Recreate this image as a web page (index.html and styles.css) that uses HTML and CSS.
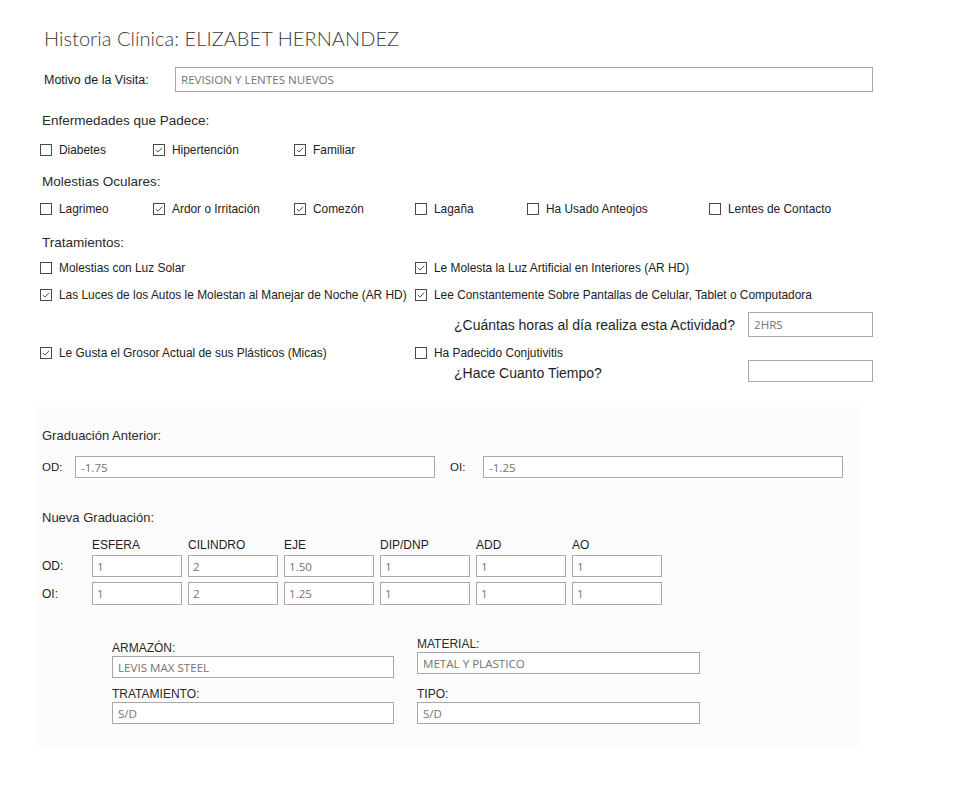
FILE: index.html
```html
<!DOCTYPE html>
<html lang="es">
<head>
<meta charset="utf-8">
<title>Historia Clínica</title>
<link rel="stylesheet" href="styles.css">
</head>
<body>
<div class="page">
  <h1 class="title">Historia Clínica: ELIZABET HERNANDEZ</h1>

  <div class="motivo">
    <span class="motivo-label">Motivo de la Visita:</span>
    <div class="field motivo-field">REVISION Y LENTES NUEVOS</div>
  </div>

  <div class="section-label sec-enf">Enfermedades que Padece:</div>
  <div class="cb-row cb-six row-enf">
    <label class="cb"><span class="box"></span>Diabetes</label>
    <label class="cb"><span class="box checked"><svg viewBox="0 0 12 12"><polyline points="2.3,6 4.8,8.5 9.8,3.2"/></svg></span>Hipertención</label>
    <label class="cb"><span class="box checked"><svg viewBox="0 0 12 12"><polyline points="2.3,6 4.8,8.5 9.8,3.2"/></svg></span>Familiar</label>
  </div>

  <div class="section-label sec-mol">Molestias Oculares:</div>
  <div class="cb-row cb-six row-mol">
    <label class="cb"><span class="box"></span>Lagrimeo</label>
    <label class="cb"><span class="box checked"><svg viewBox="0 0 12 12"><polyline points="2.3,6 4.8,8.5 9.8,3.2"/></svg></span>Ardor o Irritación</label>
    <label class="cb"><span class="box checked"><svg viewBox="0 0 12 12"><polyline points="2.3,6 4.8,8.5 9.8,3.2"/></svg></span>Comezón</label>
    <label class="cb"><span class="box"></span>Lagaña</label>
    <label class="cb"><span class="box"></span>Ha Usado Anteojos</label>
    <label class="cb"><span class="box"></span>Lentes de Contacto</label>
  </div>

  <div class="section-label sec-tra">Tratamientos:</div>
  <div class="cb-row cb-two row-t1">
    <label class="cb"><span class="box"></span>Molestias con Luz Solar</label>
    <label class="cb"><span class="box checked"><svg viewBox="0 0 12 12"><polyline points="2.3,6 4.8,8.5 9.8,3.2"/></svg></span>Le Molesta la Luz Artificial en Interiores (AR HD)</label>
  </div>
  <div class="cb-row cb-two row-t2">
    <label class="cb"><span class="box checked"><svg viewBox="0 0 12 12"><polyline points="2.3,6 4.8,8.5 9.8,3.2"/></svg></span>Las Luces de los Autos le Molestan al Manejar de Noche (AR HD)</label>
    <label class="cb"><span class="box checked"><svg viewBox="0 0 12 12"><polyline points="2.3,6 4.8,8.5 9.8,3.2"/></svg></span>Lee Constantemente Sobre Pantallas de Celular, Tablet o Computadora</label>
  </div>
  <div class="question row-horas">
    <span class="q-text">¿Cuántas horas al día realiza esta Actividad?</span>
    <div class="field q-field">2HRS</div>
  </div>
  <div class="cb-row cb-two row-t3">
    <label class="cb"><span class="box checked"><svg viewBox="0 0 12 12"><polyline points="2.3,6 4.8,8.5 9.8,3.2"/></svg></span>Le Gusta el Grosor Actual de sus Plásticos (Micas)</label>
    <label class="cb"><span class="box"></span>Ha Padecido Conjutivitis</label>
  </div>
  <div class="question row-hace">
    <span class="q-text">¿Hace Cuanto Tiempo?</span>
    <div class="field q-field"></div>
  </div>

  <div class="panel">
    <div class="panel-label">Graduación Anterior:</div>
    <div class="anterior">
      <span class="eye-label">OD:</span>
      <div class="field ant-field">-1.75</div>
      <span class="eye-label oi">OI:</span>
      <div class="field ant-field">-1.25</div>
    </div>

    <div class="panel-label nueva">Nueva Graduación:</div>
    <div class="grad-table">
      <span></span>
      <span class="col-head">ESFERA</span>
      <span class="col-head">CILINDRO</span>
      <span class="col-head">EJE</span>
      <span class="col-head">DIP/DNP</span>
      <span class="col-head">ADD</span>
      <span class="col-head">AO</span>

      <span class="row-head">OD:</span>
      <div class="field cell">1</div>
      <div class="field cell">2</div>
      <div class="field cell">1.50</div>
      <div class="field cell">1</div>
      <div class="field cell">1</div>
      <div class="field cell">1</div>

      <span class="row-head">OI:</span>
      <div class="field cell">1</div>
      <div class="field cell">2</div>
      <div class="field cell">1.25</div>
      <div class="field cell">1</div>
      <div class="field cell">1</div>
      <div class="field cell">1</div>
    </div>

    <div class="lens">
      <div class="lens-col left">
        <div class="lens-label">ARMAZÓN:</div>
        <div class="field lens-field">LEVIS MAX STEEL</div>
        <div class="lens-label second">TRATAMIENTO:</div>
        <div class="field lens-field">S/D</div>
      </div>
      <div class="lens-col right">
        <div class="lens-label">MATERIAL:</div>
        <div class="field lens-field">METAL Y PLASTICO</div>
        <div class="lens-label second">TIPO:</div>
        <div class="field lens-field">S/D</div>
      </div>
    </div>
  </div>
</div>
</body>
</html>
```

FILE: styles.css
```css
html, body {
  margin: 0;
  padding: 0;
  background: #ffffff;
}

body {
  font-family: "Liberation Sans", Arial, sans-serif;
  color: #1e1e1e;
}

.page {
  width: 958px;
  height: 790px;
  overflow: hidden;
  box-sizing: border-box;
}

.title {
  margin: 0;
  padding: 22px 0 0 44px;
  height: 32px;
  line-height: 32px;
  font-family: "Lato", "Open Sans", sans-serif;
  font-weight: 300;
  font-size: 20px;
  color: #3a3a3a;
  letter-spacing: 0.05px;
}

.field {
  box-sizing: border-box;
  border: 1px solid #a8a8a8;
  background: #ffffff;
  font-family: "Open Sans", "Noto Sans", sans-serif;
  font-size: 11.6px;
  color: #747474;
  padding: 0 5px;
  display: flex;
  align-items: center;
  white-space: nowrap;
  overflow: hidden;
}

/* Motivo */
.motivo {
  display: flex;
  align-items: center;
  margin-top: 13px;
  height: 25px;
  padding-left: 44px;
}
.motivo-label {
  width: 131px;
  font-size: 12.5px;
  color: #1a1a1a;
}
.motivo-field {
  width: 698px;
  height: 25px;
}

/* section labels */
.section-label {
  padding-left: 42px;
  height: 20px;
  line-height: 20px;
  font-size: 13.5px;
  color: #2a2a2a;
}
.sec-enf { margin-top: 19px; }
.sec-mol { margin-top: 12px; }
.sec-tra { margin-top: 14px; }

/* checkbox rows */
.cb-row {
  display: grid;
  padding-left: 40px;
  height: 20px;
  align-items: center;
}
.cb-six { grid-template-columns: 113px 141px 121px 112px 182px auto; }
.cb-two { grid-template-columns: 375px auto; }
.row-enf { margin-top: 9px; }
.row-mol { margin-top: 7px; }
.row-t1 { margin-top: 5px; }
.row-t2 { margin-top: 7px; }
.row-t3 { margin-top: 8px; height: 16px; }

.cb {
  display: flex;
  align-items: center;
  font-size: 11.9px;
  color: #222222;
  white-space: nowrap;
}
.box {
  box-sizing: border-box;
  width: 12px;
  height: 12px;
  border: 1px solid #4a4a4a;
  margin-right: 7px;
  flex: none;
  display: flex;
}
.box svg {
  width: 10px;
  height: 10px;
  fill: none;
  stroke: #444444;
  stroke-width: 1.1;
}

/* question rows */
.question {
  display: flex;
  align-items: center;
  padding-left: 454px;
}
.q-text {
  width: 294px;
  font-size: 14px;
  color: #1e1e1e;
}
.q-field {
  width: 125px;
}
.row-horas {
  margin-top: 7px;
  height: 25px;
}
.row-horas .q-field { height: 25px; }
.row-hace {
  margin-top: -1px;
  height: 22px;
}
.row-hace .q-field { height: 22px; }
.row-hace .q-text { padding-top: 4px; }

/* panel */
.panel {
  margin-top: 24px;
  margin-left: 34px;
  width: 826px;
  height: 342px;
  box-sizing: border-box;
  padding: 20px 0 0 8px;
  background: #fcfcfc;
}
.panel-label {
  height: 20px;
  line-height: 20px;
  font-size: 13px;
  color: #2a2a2a;
}
.panel-label.nueva { margin-top: 30px; }

.anterior {
  margin-top: 10px;
  display: flex;
  align-items: center;
  height: 22px;
}
.eye-label {
  width: 33px;
  font-size: 11.5px;
  color: #1e1e1e;
}
.eye-label.oi {
  margin-left: 15px;
}
.ant-field {
  width: 360px;
  height: 22px;
}

/* nueva graduacion table */
.grad-table {
  margin-top: 9px;
  display: grid;
  grid-template-columns: 44px repeat(6, 90px);
  grid-template-rows: 16px 24px 28px;
  column-gap: 6px;
}
.grad-table .col-head {
  font-size: 12px;
  color: #1e1e1e;
  line-height: 16px;
}
.grad-table .row-head {
  font-size: 12px;
  color: #1e1e1e;
  align-self: end;
  height: 22px;
  display: flex;
  align-items: center;
}
.grad-table .cell {
  align-self: end;
  height: 22px;
  padding-left: 4px;
}
.grad-table > :nth-child(n+16) { height: 23px; }

/* lens details */
.lens {
  display: flex;
  gap: 23px;
  padding-left: 70px;
  margin-top: 31px;
}
.lens-col {
  width: 283px;
}
.lens-col.left { padding-top: 4px; width: 282px; }
.lens-label {
  height: 16px;
  line-height: 16px;
  font-size: 12px;
  color: #2a2a2a;
}
.lens-col.left .lens-label.second { margin-top: 8px; }
.lens-col.right .lens-label.second { margin-top: 12px; }
.lens-field {
  height: 22px;
}
```
